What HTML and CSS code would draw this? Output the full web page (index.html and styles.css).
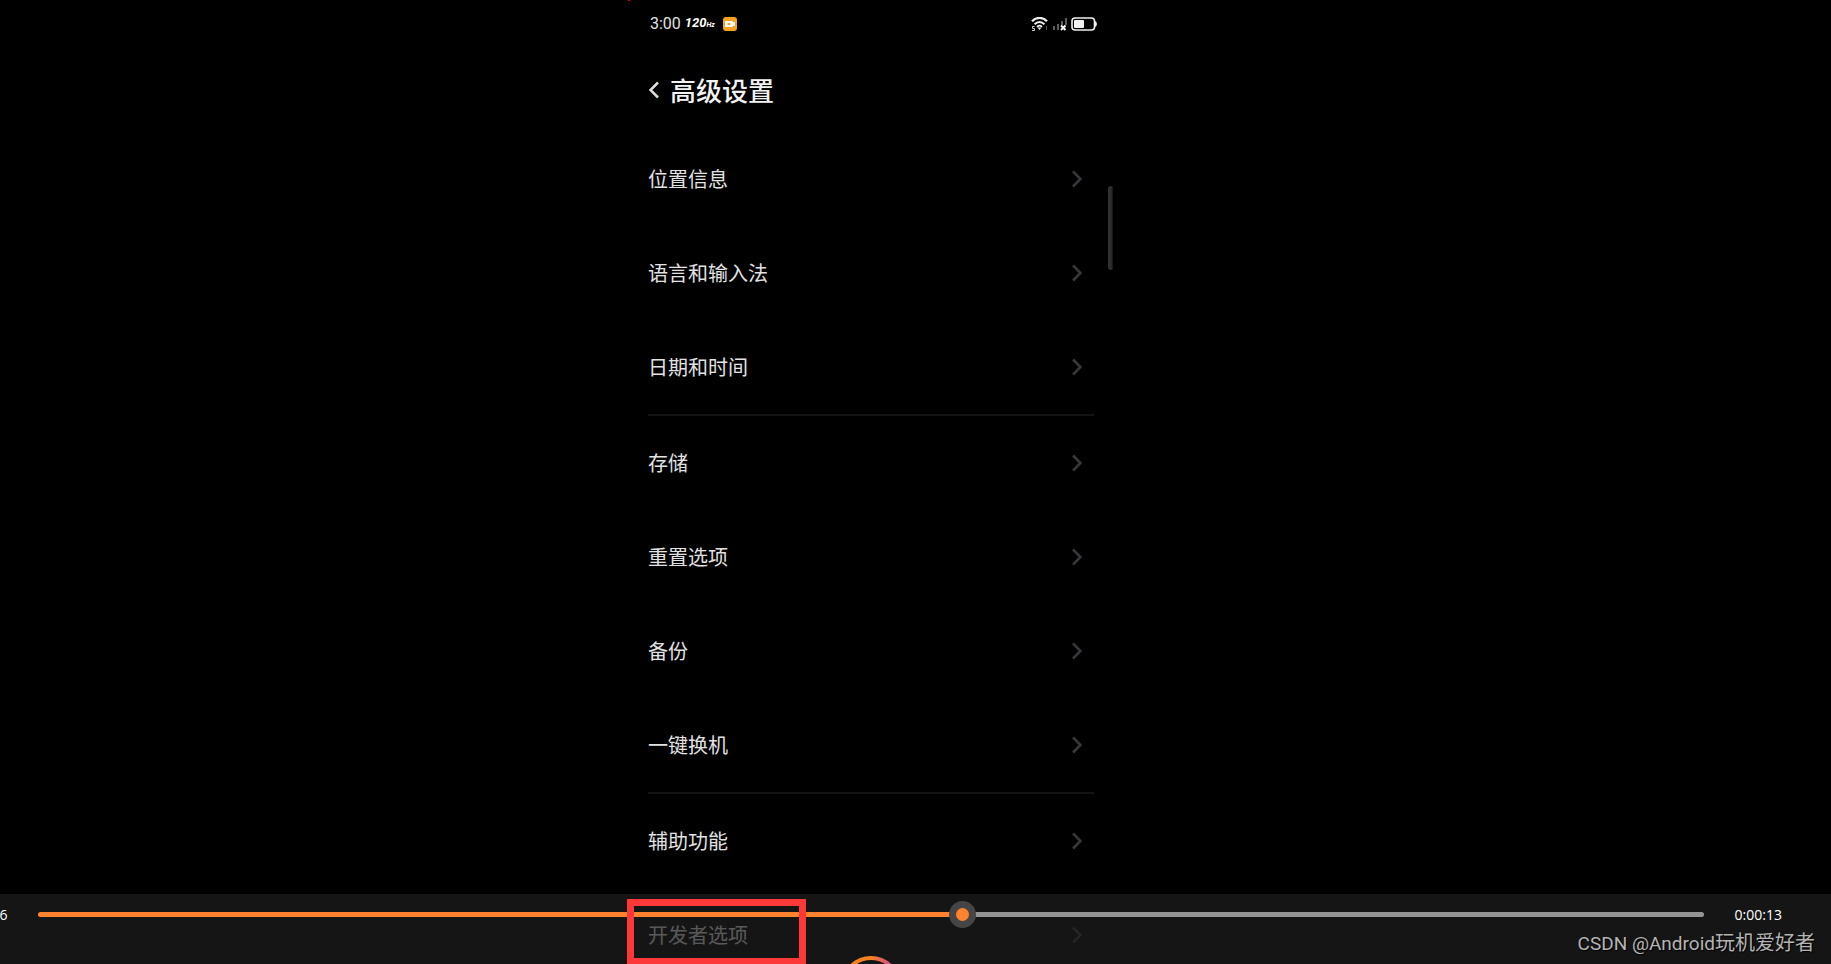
FILE: index.html
```html
<!DOCTYPE html>
<html lang="zh-CN">

<head>
    <meta charset="UTF-8">
    <meta name="viewport" content="width=device-width, initial-scale=1.0">
    <title>高级设置</title>
    <link rel="stylesheet" href="styles.css">
</head>

<body>
    <div class="player">
        <main class="phone">
            <span class="record-dot"></span>

            <div class="status">
                <div class="status-left">
                    <span class="clock">3:00</span>
                    <span class="rate">120<small>Hz</small></span>
                    <svg class="rec" width="14" height="14" viewBox="0 0 14 14">
                        <rect width="14" height="14" rx="3" fill="#f9a11f" />
                        <rect x="2" y="4" width="8" height="6" rx="1" fill="#fff" />
                        <path d="M9 6l3-1v4l-3-1z" fill="#fff" />
                        <rect x="4.500" y="6" width="3" height="2" fill="#f9a11f" />
                    </svg>
                </div>
                <div class="status-right">
                    <svg width="17" height="14" viewBox="0 0 17 14" fill="none" stroke="#eee">
                        <path d="M1 4.2C5-.2 12-.2 16 4.2" stroke-width="2.200" />
                        <path d="M3.600 7.200c3-3 6.800-3 9.800 0" stroke-width="2" />
                        <path d="M6 9.800c1.500-1.400 3.500-1.400 5 0" stroke-width="1.800" />
                        <path d="M6.500 10.500h4l-2 2.500z" fill="#eee" stroke="none" />
                        <path d="M3.500 9.500H1.500v2h2v2H1" stroke="#ccc" />
                        <path d="M15.500 9v4" stroke="#555" />
                    </svg>
                    <svg width="15" height="14" viewBox="0 0 15 14">
                        <path d="M1 9h2v4H1zM5 7h2v6H5zM9 4h2v4H9zM13 1h2v7h-2z" fill="#5c5c5c" />
                        <path d="M9 8.500l4.500 4.500M13.500 8.500L9 13" stroke="#fff" stroke-width="2" />
                    </svg>
                    <svg width="26" height="14" viewBox="0 0 26 14">
                        <rect x="1" y="1" width="22.500" height="12" rx="3" fill="none" stroke="#eee" stroke-width="1.600" />
                        <rect x="3" y="3" width="10" height="8" rx="1" fill="#f4f4f4" />
                        <path d="M24 4c2.500 1 2.500 5 0 6z" fill="#eee" />
                    </svg>
                </div>
            </div>

            <header class="title">
                <a href="#" aria-label="返回">
                    <svg width="10" height="18" viewBox="0 0 10 18"><path d="M9 1.500L1.500 9L9 16.500" /></svg>
                </a>
                <h1>高级设置</h1>
            </header>

            <ul class="settings">
                <li><a href="#">位置信息<svg width="10" height="18" viewBox="0 0 10 18"><path d="M1 1.500L8.500 9L1 16.500" /></svg></a></li>
                <li><a href="#">语言和输入法<svg width="10" height="18" viewBox="0 0 10 18"><path d="M1 1.500L8.500 9L1 16.500" /></svg></a></li>
                <li><a href="#">日期和时间<svg width="10" height="18" viewBox="0 0 10 18"><path d="M1 1.500L8.500 9L1 16.500" /></svg></a></li>
            </ul>
            <ul class="settings">
                <li><a href="#">存储<svg width="10" height="18" viewBox="0 0 10 18"><path d="M1 1.500L8.500 9L1 16.500" /></svg></a></li>
                <li><a href="#">重置选项<svg width="10" height="18" viewBox="0 0 10 18"><path d="M1 1.500L8.500 9L1 16.500" /></svg></a></li>
                <li><a href="#">备份<svg width="10" height="18" viewBox="0 0 10 18"><path d="M1 1.500L8.500 9L1 16.500" /></svg></a></li>
                <li><a href="#">一键换机<svg width="10" height="18" viewBox="0 0 10 18"><path d="M1 1.500L8.500 9L1 16.500" /></svg></a></li>
            </ul>
            <ul class="settings">
                <li><a href="#">辅助功能<svg width="10" height="18" viewBox="0 0 10 18"><path d="M1 1.500L8.500 9L1 16.500" /></svg></a></li>
                <li><a href="#">开发者选项<svg width="10" height="18" viewBox="0 0 10 18"><path d="M1 1.500L8.500 9L1 16.500" /></svg></a></li>
            </ul>

            <span class="scrollbar"></span>
            <span class="highlight"></span>
        </main>

        <div class="controls">
            <div class="seek">
                <span class="time">0:00:06</span>
                <input type="range" min="0" max="1000" value="556" aria-label="播放进度">
                <span class="time">0:00:13</span>
            </div>
            <button class="play" type="button" aria-label="播放">
                <svg width="60" height="60" viewBox="0 0 60 60">
                    <defs>
                        <linearGradient id="ring" x1="0" x2="1">
                            <stop offset="0.5" stop-color="#f58220" />
                            <stop offset="0.850" stop-color="#d8488a" />
                        </linearGradient>
                    </defs>
                    <circle cx="30" cy="30" r="28" fill="none" stroke="url(#ring)" stroke-width="4" />
                    <path d="M24 18l18 12-18 12z" fill="#eee" />
                </svg>
            </button>
        </div>
    </div>

    <p class="watermark"><span>CSDN @Android</span>玩机爱好者</p>
</body>

</html>
```

FILE: styles.css
```css
body {
    background-color: #000;
    color: #e2e2e2;
    font-family: "Noto Sans CJK SC", sans-serif;
    margin: 0;
    overflow: hidden;
}

a {
    color: inherit;
    text-decoration: none;
}

/* the player runs past the left and bottom edges of the window */
.player {
    position: relative;
    height: 100vh;
    margin-left: -89px;
    overflow: hidden;
}

.phone {
    position: relative;
    width: 486px;
    max-width: 100%;
    margin: 0 auto;
}

.record-dot {
    position: absolute;
    top: 0;
    left: 0;
    width: 2px;
    height: 1px;
    background-color: #d00000;
}

.status {
    display: flex;
    justify-content: space-between;
    align-items: center;
    height: 48px;
    padding: 0 17px 0 22px;
    font-family: Roboto, sans-serif;
}

.status-left,
.status-right {
    display: flex;
    align-items: center;
    gap: 4px;
}

.clock {
    font-size: 16px;
    line-height: 20px;
}

.rate {
    color: #fff;
    font-size: 13px;
    font-style: italic;
    font-weight: bold;
    line-height: 20px;
}

.rate small {
    font-size: 7px;
}

.rec {
    margin-left: 4px;
}

.title {
    display: flex;
    align-items: center;
    gap: 11px;
    height: 84px;
    padding: 0 21px;
}

.title a {
    display: flex;
}

.title h1 {
    color: #f2f2f2;
    font-size: 26px;
    font-weight: 500;
    line-height: 36px;
    margin: 0;
}

.title path,
.settings path {
    fill: none;
    stroke: #ddd;
    stroke-width: 2.5;
}

.settings {
    list-style: none;
    margin: 0 20px;
    padding: 0;
}

.settings + .settings {
    border-top: 2px solid #141414;
}

.settings a {
    display: flex;
    justify-content: space-between;
    align-items: center;
    height: 94px;
    padding-right: 12px;
    font-size: 20px;
    line-height: 28px;
}

.settings path {
    stroke: #38383c;
}

.scrollbar {
    position: absolute;
    top: 186px;
    right: 1px;
    width: 5px;
    height: 84px;
    border-radius: 3px 0 0 3px;
    background: linear-gradient(to right, #333, #2c2c2c 60%, #111);
}

.highlight {
    position: absolute;
    top: 899px;
    left: -1px;
    z-index: 2;
    box-sizing: border-box;
    width: 179px;
    height: 66px;
    border: 7px solid #fc3838;
}

.controls {
    position: absolute;
    right: 0;
    bottom: -60px;
    left: 0;
    z-index: 1;
    display: flex;
    flex-direction: column;
    align-items: center;
    gap: 21px;
    padding-bottom: 8px;
    background-color: rgba(30, 30, 30, 0.7);
}

.seek {
    display: flex;
    align-items: center;
    align-self: stretch;
    gap: 31px;
    height: 41px;
    padding: 0 49px;
}

.time {
    color: #fff;
    font-family: "Open Sans", sans-serif;
    font-size: 14px;
    line-height: 20px;
}

.seek input {
    flex: 1;
    height: 5px;
    margin: 0;
    border-radius: 3px;
    appearance: none;
    background: linear-gradient(to right, #ff832f 55%, #949494 55%);
}

.seek input::-webkit-slider-thumb {
    box-sizing: border-box;
    width: 27px;
    height: 27px;
    border: 7px solid #454545;
    border-radius: 50%;
    appearance: none;
    background-color: #ff832f;
}

.play {
    display: flex;
    padding: 0;
    border: 0;
    background: none;
}

.watermark {
    position: absolute;
    right: 16px;
    bottom: 6px;
    z-index: 3;
    margin: 0;
    color: #b4b4b4;
    font-size: 20px;
    line-height: 28px;
    text-shadow: 1px 1px 1px #000;
}

.watermark span {
    font-family: Roboto, sans-serif;
    font-size: 19px;
}
```
